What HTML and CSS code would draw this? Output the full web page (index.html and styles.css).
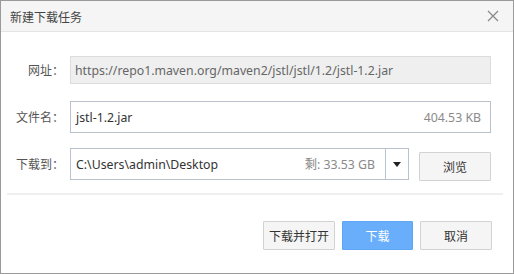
FILE: index.html
```html
<!DOCTYPE html>
<html lang="zh-CN">
<head>
    <meta charset="UTF-8">
    <title>新建下载任务</title>
    <link rel="stylesheet" href="styles.css">
</head>
<body>
    <div class="dialog">
        <div class="titlebar">
            <span class="title">新建下载任务</span>
            <span class="close">
                <svg width="12" height="12" viewBox="0 0 12 12"><path d="M1 1L11 11M11 1L1 11" stroke="#8a8a8a" stroke-width="1.3" fill="none"/></svg>
            </span>
        </div>
        <div class="content">
            <div class="row">
                <label>网址：</label>
                <div class="field url">https://repo1.maven.org/maven2/jstl/jstl/1.2/jstl-1.2.jar</div>
            </div>
            <div class="row tall">
                <label>文件名：</label>
                <div class="field name">
                    <span class="value">jstl-1.2.jar</span>
                    <span class="meta">404.53 KB</span>
                </div>
            </div>
            <div class="row tall">
                <label>下载到：</label>
                <div class="field path">
                    <span class="value">C:\Users\admin\Desktop</span>
                    <span class="meta">剩: 33.53 GB</span>
                    <span class="drop"><svg width="8" height="5" viewBox="0 0 8 5"><path d="M0 0H8L4 5Z" fill="#222"/></svg></span>
                </div>
                <button class="btn browse">浏览</button>
            </div>
            <div class="sep"></div>
            <div class="actions">
                <button class="btn">下载并打开</button>
                <button class="btn primary">下载</button>
                <button class="btn">取消</button>
            </div>
        </div>
    </div>
</body>
</html>
```

FILE: styles.css
```css
html, body {
    margin: 0;
    background: #ffffff;
}
.dialog {
    width: 514px;
    height: 274px;
    box-sizing: border-box;
    border: 1px solid #9a9a9a;
    background: #ffffff;
    font-family: "Noto Sans", "Noto Sans CJK SC", sans-serif;
    font-size: 12px;
    color: #333;
    display: flex;
    flex-direction: column;
}
.titlebar {
    height: 30px;
    background: #f5f5f5;
    border-bottom: 1px solid #e4e4e4;
    display: flex;
    align-items: center;
    justify-content: space-between;
    padding: 0 14px 0 9px;
}
.title {
    font-family: "Noto Sans CJK SC", sans-serif;
    font-size: 12px;
    color: #444;
}
.close {
    display: flex;
}
.content {
    flex: 1;
    padding-top: 24px;
}
.row {
    display: flex;
    align-items: flex-start;
    margin-bottom: 15px;
}
.row:first-child {
    margin-bottom: 17px;
}
.row label {
    width: 63px;
    margin-right: 6px;
    text-align: right;
    font-family: "Noto Sans CJK SC", sans-serif;
    color: #555;
    line-height: 28px;
}
.row.tall label {
    line-height: 32px;
}
.field {
    box-sizing: border-box;
    height: 32px;
    border: 1px solid #b9c2cc;
    display: flex;
    align-items: center;
    padding-left: 5px;
    font-size: 12.3px;
    color: #333;
}
.field.url {
    width: 421px;
    height: 28px;
    background: #efefef;
    border-color: #dcdcdc;
    color: #666;
    padding-left: 4px;
}
.field.name {
    width: 421px;
}
.field.path {
    width: 339px;
    padding-right: 0;
}
.value {
    flex: 1;
}
.meta {
    color: #8a8a8a;
    padding-right: 10px;
}
.field.name .meta {
    padding-right: 9px;
}
.drop {
    width: 22px;
    height: 30px;
    border-left: 1px solid #b9c2cc;
    display: flex;
    align-items: center;
    justify-content: center;
}
.btn {
    box-sizing: border-box;
    width: 72px;
    height: 29px;
    border: 1px solid #d2d2d2;
    background: #f5f5f5;
    font-family: "Noto Sans CJK SC", sans-serif;
    font-size: 12px;
    color: #333;
    padding: 0;
    border-radius: 1px;
}
.btn.browse {
    margin-left: 10px;
    margin-top: 4px;
}
.btn.primary {
    width: 71px;
    background: #68aefb;
    border-color: #5fa5f5;
    color: #ffffff;
}
.sep {
    height: 2px;
    background: #efefef;
    margin: -3px 10px 0 6px;
}
.actions {
    display: flex;
    justify-content: flex-end;
    gap: 7px;
    padding: 26px 21px 0 0;
}
```
